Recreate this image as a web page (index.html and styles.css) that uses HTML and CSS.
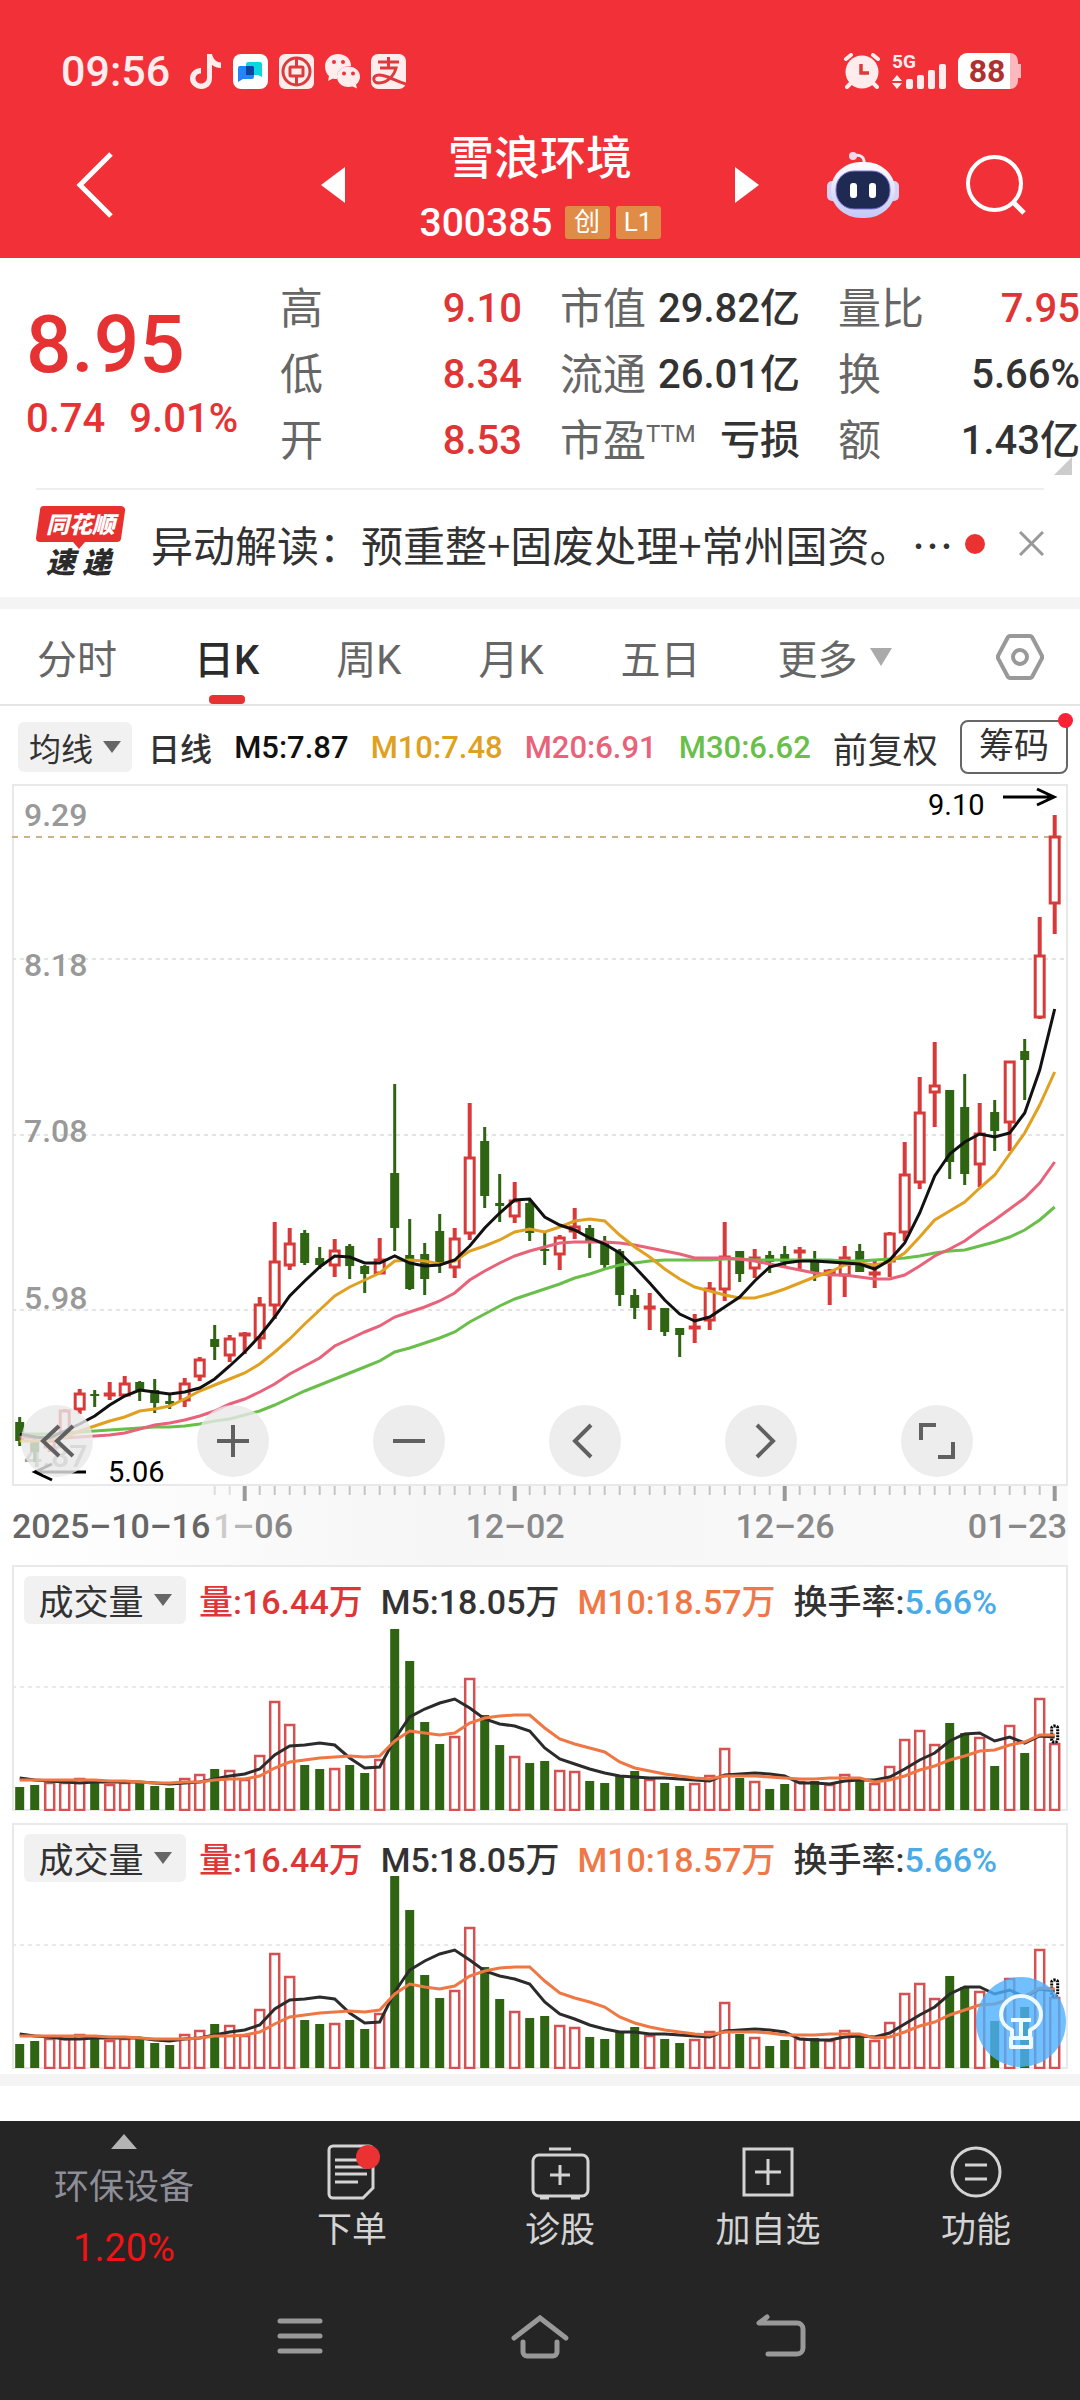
FILE: index.html
```html
<!DOCTYPE html>
<html lang="zh">
<head>
	<meta charset="UTF-8" />
	<meta name="viewport" content="width=device-width, initial-scale=1.0" />
	<title>雪浪环境 300385</title>
	<link rel="stylesheet" href="styles.css">
</head>
<body>
	<header class="top">
		<div class="status">
			<span class="clock">09:56</span>
			<svg class="app_ico" viewBox="0 0 35 35" width="35" height="35"><path d="M20 0h5c1 5 4 8 9 8.500v5.500c-3.500 0-6.500-1-9-3v13c0 7-5 11-10.500 11S3 30.500 3 24.500 8 14 14 14v5.500c-3.500 0-5.500 2.200-5.500 5s2.500 5 5.500 5c3.500 0 6-2.500 6-6z" fill="#ffecec"/></svg>
			<svg class="app_ico" viewBox="0 0 35 35" width="35" height="35"><rect width="35" height="35" rx="8" fill="#fff"/><path d="M15 8h12a2 2 0 0 1 2 2v13l-4-2H13V10a2 2 0 0 1 2-2z" fill="#0bd8de"/><path d="M7 12h12a2 2 0 0 1 2 2v9a2 2 0 0 1-2 2h-9l-5 3V14a2 2 0 0 1 2-2z" fill="#2484fb"/><path d="M13 12h6a2 2 0 0 1 2 2v7h-8z" fill="#0a469c"/></svg>
			<svg class="app_ico" viewBox="0 0 35 35" width="35" height="35"><rect width="35" height="35" rx="6" fill="#ffecec"/><g fill="none" stroke="#dc3b3d" stroke-width="3"><circle cx="17.500" cy="17.500" r="13.500"/><rect x="11" y="13" width="13" height="9" rx="1"/><path d="M17.500 4v9M17.500 22v9"/></g></svg>
			<svg class="app_ico" viewBox="0 0 35 35" width="35" height="35"><path d="M13 0c7.500 0 13 5 13 11.500v.5c-8 0-14 4-14 11v2c-2 0-3 0-4-.500L3 27l1-5C1.500 20 0 16 0 12.500 0 5.500 5.500 0 13 0z" fill="#ffecec"/><path d="M23.500 12.500c6.500 0 11.500 4.500 11.500 10 0 3.500-1.500 6-4 8l1 4-4.500-2c-9 2-15.500-3-15.500-10 0-5.500 5-10 11.500-10z" fill="#ffecec"/><g fill="#f03038"><circle cx="9" cy="8" r="2"/><circle cx="18" cy="8" r="2"/><circle cx="19" cy="19.500" r="2"/><circle cx="28" cy="19.500" r="2"/></g></svg>
			<svg class="app_ico" viewBox="0 0 35 35" width="35" height="35"><rect width="35" height="35" rx="7" fill="#ffecec"/><path d="M7 8h21M17.500 3v10M9 14h16c-2 8-9 15-17 15-7 0-7-8 0-8 8 0 14 5 27 9" fill="none" stroke="#dc3b3d" stroke-width="3"/></svg>

			<svg class="alarm" viewBox="0 0 38 36" width="38" height="36"><g stroke="#ffecec" stroke-width="4" stroke-linecap="round"><path d="M3 6l5-4M35 6l-5-4M8 30l-4 4M30 30l4 4"/></g><circle cx="19" cy="19" r="16.500" fill="#ffecec"/><path d="M18 11v9h8" fill="none" stroke="#dc3b3d" stroke-width="3.500"/></svg>
			<svg class="signal" viewBox="0 0 55 42" width="55" height="42"><text x="0" y="18" class="net">5G</text><g fill="#ffecec"><path d="M5 25l5 6H0zM0 33h10l-5 6z"/><rect x="14" y="29" width="7" height="10" rx="2"/><rect x="25" y="25" width="7" height="14" rx="2"/><rect x="36" y="20" width="7" height="19" rx="2"/><rect x="47" y="14" width="7" height="25" rx="2"/></g></svg>
			<svg class="battery" viewBox="0 0 64 36" width="64" height="36"><path d="M10 0h42a8 8 0 0 1 8 8v3h3v14h-3v3a8 8 0 0 1-8 8H10z" fill="#fbb9bd"/><path d="M9 0h43v36H9a9 9 0 0 1-9-9V9a9 9 0 0 1 9-9z" fill="#fff"/><text x="29" y="29" text-anchor="middle" class="level">88</text></svg>
		</div>
		<div class="bar">
			<div class="bar_l">
				<button type="button" aria-label="返回"><svg viewBox="0 0 38 66" width="38" height="66"><path d="M35 2L4 33l31 31" fill="none" stroke="#fff" stroke-width="5"/></svg></button>
				<button type="button" aria-label="上一只"><svg viewBox="0 0 24 36" width="24" height="36"><path d="M24 0v36L0 18z" fill="#fff"/></svg></button>
			</div>
			<div class="title">
				<h1>雪浪环境</h1>
				<p><span class="code">300385</span><span class="tag">创</span><span class="tag">L1</span></p>
			</div>
			<div class="bar_r">
				<button type="button" aria-label="下一只"><svg viewBox="0 0 24 36" width="24" height="36"><path d="M0 0v36l24-18z" fill="#fff"/></svg></button>
				<button type="button" aria-label="智能助手">
					<svg viewBox="0 0 72 66" width="72" height="66">
						<defs><linearGradient id="shell" x1="0" y1="0" x2="0" y2="1"><stop offset="0" stop-color="#fff"/><stop offset="1" stop-color="#c3c8f6"/></linearGradient></defs>
						<path d="M27 4c6-2 11 1 10 8" fill="none" stroke="#f4e6f4" stroke-width="3"/><circle cx="26" cy="4" r="4" fill="#f0d9ea"/>
						<rect x="0" y="29" width="12" height="20" rx="5" fill="#d5d2f6"/><rect x="60" y="29" width="12" height="20" rx="5" fill="#d5d2f6"/>
						<rect x="4" y="10" width="64" height="56" rx="30" ry="27" fill="url(#shell)"/>
						<rect x="9" y="19" width="54" height="38" rx="18" fill="#1e2a52" stroke="#8173d8" stroke-width="1"/>
						<rect x="23" y="31" width="7" height="15" rx="3" fill="#fff"/><rect x="42" y="31" width="7" height="15" rx="3" fill="#fff"/>
					</svg>
				</button>
				<button type="button" aria-label="搜索"><svg viewBox="0 0 60 60" width="60" height="60"><g fill="none" stroke="#fff" stroke-width="4"><circle cx="28.500" cy="28.500" r="26.500"/><path d="M47 47l11 11" stroke-width="5"/></g></svg></button>
			</div>
		</div>
	</header>

	<section class="quote">
		<div class="price">
			<strong>8.95</strong>
			<p><span>0.74</span><span>9.01%</span></p>
		</div>
		<dl>
			<div><dt>高</dt><dd class="red">9.10</dd></div>
			<div><dt>低</dt><dd class="red">8.34</dd></div>
			<div><dt>开</dt><dd class="red">8.53</dd></div>
		</dl>
		<dl>
			<div><dt>市值</dt><dd>29.82亿</dd></div>
			<div><dt>流通</dt><dd>26.01亿</dd></div>
			<div><dt>市盈<sup>TTM</sup></dt><dd>亏损</dd></div>
		</dl>
		<dl>
			<div><dt>量比</dt><dd class="red">7.95</dd></div>
			<div><dt>换</dt><dd>5.66%</dd></div>
			<div><dt>额</dt><dd>1.43亿</dd></div>
		</dl>
		<i class="corner"></i>
	</section>

	<section class="news">
		<svg viewBox="0 0 92 78" width="92" height="78"><path d="M9 1h77a4 4 0 0 1 4 5l-4 28a4 4 0 0 1-4 3H50l-6 7-6-7H5a4 4 0 0 1-4-4L5 5a4 4 0 0 1 4-4z" fill="#e8302f"/><text x="11" y="28" class="logo_a">同花顺</text><text x="11" y="68" class="logo_b">速</text><text x="47" y="68" class="logo_b">递</text></svg>
		<a href="#">异动解读：预重整+固废处理+常州国资。…</a>
		<i class="news_dot"></i>
		<button type="button" aria-label="关闭"><svg viewBox="0 0 25 25" width="25" height="25"><path d="M1 1l23 23M24 1L1 24" stroke="#999" stroke-width="3"/></svg></button>
	</section>

	<nav class="tabs">
		<button type="button">分时</button>
		<button type="button" class="on">日K</button>
		<button type="button">周K</button>
		<button type="button">月K</button>
		<button type="button">五日</button>
		<button type="button" class="more">更多<i></i></button>
		<button type="button" class="setting" aria-label="设置"><svg viewBox="0 0 48 46" width="48" height="46"><g fill="none" stroke="#999" stroke-width="4"><path d="M14 2h20a3 3 0 0 1 2 1l9 17a5 5 0 0 1 0 6l-9 17a3 3 0 0 1-2 1H14a3 3 0 0 1-2-1L3 26a5 5 0 0 1 0-6l9-17a3 3 0 0 1 2-1z"/><circle cx="24" cy="23" r="7"/></g></svg></button>
	</nav>

	<div class="ma_row">
		<button type="button" class="pick">均线<i></i></button>
		<span class="cycle">日线</span>
		<span class="m5">M5:7.87</span>
		<span class="m10">M10:7.48</span>
		<span class="m20">M20:6.91</span>
		<span class="m30">M30:6.62</span>
		<span class="fq">前复权</span>
		<button type="button" class="chip">筹码</button>
	</div>

	<div class="kline">
		<svg id="kline" viewBox="12 784 1056 781" role="img" aria-label="日K线图"></svg>
		<div class="tools">
			<button type="button" aria-label="最左"><svg viewBox="0 0 36 36"><path d="M20 3L4 18l16 15M34 3L18 18l16 15"/></svg></button>
			<button type="button" aria-label="放大"><svg viewBox="0 0 36 36"><path d="M18 2v32M2 18h32"/></svg></button>
			<button type="button" aria-label="缩小"><svg viewBox="0 0 36 36"><path d="M2 18h32"/></svg></button>
			<button type="button" aria-label="左移"><svg viewBox="0 0 36 36"><path d="M24 2L8 18l16 16"/></svg></button>
			<button type="button" aria-label="右移"><svg viewBox="0 0 36 36"><path d="M14 2l16 16-16 16"/></svg></button>
			<button type="button" aria-label="全屏"><svg viewBox="0 0 36 36"><path d="M2 17V2h15M19 34h15V19"/></svg></button>
		</div>
	</div>

	<section class="vol">
		<svg id="vol1" viewBox="12 0 1056 246" role="img" aria-label="成交量"></svg>
		<div class="vol_head">
			<button type="button" class="pick">成交量<i></i></button>
			<span class="red">量:16.44万</span>
			<span>M5:18.05万</span>
			<span class="orange">M10:18.57万</span>
			<span>换手率:<b>5.66%</b></span>
		</div>
	</section>
	<section class="vol">
		<svg id="vol2" viewBox="12 0 1056 246" role="img" aria-label="成交量"></svg>
		<div class="vol_head">
			<button type="button" class="pick">成交量<i></i></button>
			<span class="red">量:16.44万</span>
			<span>M5:18.05万</span>
			<span class="orange">M10:18.57万</span>
			<span>换手率:<b>5.66%</b></span>
		</div>
		<button type="button" class="bulb" aria-label="提示"><svg viewBox="0 0 44 56" width="44" height="56"><g fill="none" stroke="#eefaff" stroke-width="4" stroke-linejoin="round"><path d="M13 42v-6C6 33 2 27 2 21a20 19 0 0 1 40 0c0 6-4 12-11 15v6"/><path d="M12 26h20M22 26v18M12 44h20v9H12z"/></g></svg></button>
	</section>
	<div class="line"></div>

	<footer class="bottom">
		<div class="menu">
			<a href="#" class="plate"><i></i><span>环保设备</span><em>1.20%</em></a>
			<a href="#"><svg viewBox="0 0 56 56" width="56" height="56"><g fill="none" stroke="#d4d4d4" stroke-width="3"><path d="M9 2h36a4 4 0 0 1 4 4v38L39 54H9a4 4 0 0 1-4-4V6a4 4 0 0 1 4-4z"/><path d="M11 16h24M11 23h32M11 30h32M11 38h23"/></g><circle cx="44" cy="13" r="12" fill="#ea3233"/></svg><span>下单</span></a>
			<a href="#"><svg viewBox="0 0 60 56" width="60" height="56"><g fill="none" stroke="#d4d4d4" stroke-width="3"><rect x="3" y="11" width="55" height="41" rx="6"/><path d="M19 5h22M30 21v20M20 31h20M10 54h9M41 54h9"/></g></svg><span>诊股</span></a>
			<a href="#"><svg viewBox="0 0 56 56" width="56" height="56"><g fill="none" stroke="#d4d4d4" stroke-width="3"><rect x="4" y="5" width="48" height="46"/><path d="M28 15v26M15 28h26"/></g></svg><span>加自选</span></a>
			<a href="#"><svg viewBox="0 0 56 56" width="56" height="56"><g fill="none" stroke="#d4d4d4" stroke-width="3"><circle cx="28" cy="28" r="24"/><path d="M17 21h22M17 35h22"/></g></svg><span>功能</span></a>
		</div>
		<div class="sys">
			<button type="button" aria-label="菜单"><svg viewBox="0 0 60 46" width="60" height="46"><path d="M10 7h40M10 22h40M10 37h40" stroke="#999" stroke-width="5" stroke-linecap="round"/></svg></button>
			<button type="button" aria-label="主页"><svg viewBox="0 0 60 46" width="60" height="46"><path d="M4 24L30 4l26 20M13 28v10a4 4 0 0 0 4 4h26a4 4 0 0 0 4-4V28" fill="none" stroke="#999" stroke-width="5" stroke-linecap="round"/></svg></button>
			<button type="button" aria-label="返回"><svg viewBox="0 0 60 46" width="60" height="46"><path d="M17 3L9 9h38a6 6 0 0 1 6 6v19a6 6 0 0 1-6 6H18" fill="none" stroke="#999" stroke-width="5" stroke-linecap="round" stroke-linejoin="round"/></svg></button>
		</div>
	</footer>

	<script src="chart.js"></script>
</body>
</html>
```
FILE: styles.css
```css
*{ margin: 0;padding: 0;box-sizing: border-box;}
body{
	background: #fff;
	color: #323232;
	font-family: Roboto, "Noto Sans CJK SC", sans-serif;
	min-height: 100vh;
	display: flex;
	flex-direction: column;
}
button{ border: 0;background: none;font: inherit;color: inherit;cursor: pointer;}
a{ text-decoration: none;color: inherit;}
i,em{ font-style: normal;}
svg{ display: block;}
.red{ color: #e03535;}
.orange{ color: #f07846;}

/* 顶部 */
.top{ background: #f13038;color: #fff;height: 258px;}
.status{
	display: flex;
	align-items: center;
	gap: 11px;
	padding: 53px 58px 0 61px;
	height: 89px;
	color: #ffecec;
}
.clock{ font-size: 43px;line-height: 36px;font-weight: 500;margin-right: 6px;}
.alarm{ margin-left: auto;}
.net{ font-size: 19px;font-weight: 700;fill: #ffecec;}
.level{ font-size: 32px;font-weight: 700;fill: #b03030;}
.bar{
	display: grid;
	grid-template-columns: 1fr 390px 1fr;
	align-items: center;
	height: 169px;
}
.bar_l,.bar_r{ display: flex;justify-content: space-between;align-items: center;padding-top: 22px;}
.bar_l{ padding-left: 76px;}
.bar_r{ padding-right: 54px;}
.title{ text-align: center;padding-top: 32px;}
.title h1{ font-size: 46px;line-height: 66px;font-weight: 500;}
.title p{ display: flex;justify-content: center;align-items: center;gap: 6px;height: 64px;}
.code{ font-size: 39px;font-weight: 500;margin-right: 6px;}
.tag{
	width: 45px;
	height: 33px;
	line-height: 33px;
	font-size: 26px;
	background: #e08c46;
	border-radius: 3px;
}

/* 行情 */
.quote{
	position: relative;
	display: grid;
	grid-template-columns: 216fr 242fr 240fr 242fr;
	column-gap: 38px;
	padding: 18px 0 16px 26px;
}
.quote::after{
	content: "";
	position: absolute;
	left: 36px;
	right: 36px;
	bottom: 0;
	height: 2px;
	background: #eee;
}
.price{ color: #e63232;padding-top: 25px;white-space: nowrap;}
.price strong{ display: block;font-size: 80px;line-height: 88px;font-weight: 500;}
.price p{ display: flex;gap: 24px;font-size: 40px;line-height: 60px;font-weight: 500;}
.quote dl div{ display: flex;justify-content: space-between;height: 66px;line-height: 66px;white-space: nowrap;}
.quote dt{ font-size: 43px;color: #666;}
.quote dt sup{ font-size: 24px;line-height: 24px;vertical-align: 14px;}
.quote dd{ font-size: 40px;font-weight: 500;}
.corner{
	position: absolute;
	right: 8px;
	bottom: 15px;
	border-left: 18px solid transparent;
	border-bottom: 18px solid #ccc;
}

.news{ display: flex;align-items: center;height: 107px;padding: 0 36px 0 35px;}
.news a{
	flex: 1;
	min-width: 0;
	margin-left: 24px;
	font-family: "Noto Sans CJK SC", sans-serif;
	font-size: 42px;
	white-space: nowrap;
	overflow: hidden;
}
.news_dot{ width: 20px;height: 20px;border-radius: 50%;background: #ea3233;margin-right: 34px;}
.logo_a{ font-size: 23px;font-weight: 900;font-style: italic;fill: #fff;}
.logo_b{ font-size: 29px;font-weight: 900;font-style: italic;fill: #2b2b2b;}

/* 周期 */
.tabs{
	display: flex;
	align-items: stretch;
	gap: 77px;
	height: 109px;
	padding: 0 36px 0 37px;
	border-top: 12px solid #f4f4f4;
	border-bottom: 2px solid #e6e6e6;
	font-size: 40px;
	color: #666;
}
.tabs button{ position: relative;white-space: nowrap;}
.tabs .on{ color: #2b2b2b;font-weight: 500;}
.tabs .on::after{
	content: "";
	position: absolute;
	left: 50%;
	bottom: 0;
	width: 36px;
	height: 9px;
	margin-left: -18px;
	border-radius: 4px;
	background: #e63232;
}
.more{ display: flex;align-items: center;gap: 12px;}
.more i{ border: 11px solid transparent;border-top: 18px solid #aaa;border-bottom: 0;}
.setting{ margin-left: auto;}

.ma_row{
	display: flex;
	justify-content: space-between;
	align-items: center;
	height: 78px;
	padding: 4px 12px 0 18px;
	font-size: 31px;
	white-space: nowrap;
}
.ma_row span{ font-weight: 500;}
.pick{
	display: flex;
	align-items: center;
	justify-content: center;
	gap: 10px;
	background: #f1f1f1;
	border-radius: 6px;
}
.pick i{ border: 9px solid transparent;border-top: 12px solid #666;border-bottom: 0;}
.ma_row .pick{ width: 114px;height: 50px;font-size: 32px;margin-right: -6px;}
.ma_row .cycle{ font-size: 32px;}
.ma_row .fq{ font-size: 35px;font-weight: 400;}
.ma_row .m5{ color: #111;}
.m10{ color: #e0a020;}
.m20{ color: #e8637a;}
.m30{ color: #6abf4b;}
.chip{
	position: relative;
	width: 108px;
	height: 54px;
	border: 2px solid #666;
	border-radius: 8px;
	font-size: 35px;
	line-height: 50px;
}
.chip::after{
	content: "";
	position: absolute;
	top: -9px;
	right: -7px;
	width: 15px;
	height: 15px;
	border-radius: 50%;
	background: #fb2237;
}

/* K线 */
.kline{ position: relative;margin: 0 12px;}
.kline > svg,.vol > svg{ width: 100%;height: auto;}
.tools{
	position: absolute;
	left: 9px;
	bottom: 88px;
	display: flex;
	gap: 104px;
}
.tools button{
	display: flex;
	align-items: center;
	justify-content: center;
	width: 72px;
	height: 72px;
	border-radius: 50%;
	background: rgba(233,233,233,.8);
}
.tools svg{ width: 36px;height: 36px;fill: none;stroke: #606060;stroke-width: 4;}
.axis{ font-size: 32px;font-weight: 500;fill: #999;}
.date{ font-size: 34px;font-weight: 500;fill: #888;}
.date_on{ fill: #666;}
.mark{ font-size: 29px;fill: #000;}

/* 成交量 */
.vol{ position: relative;display: grid;margin: 0 12px 12px;}
.vol > svg,.vol_head{ grid-area: 1 / 1;}
.vol_head{
	display: flex;
	align-items: center;
	align-self: start;
	gap: 18px;
	margin: 10px 0 0 12px;
	font-size: 34px;
	font-weight: 500;
	white-space: nowrap;
}
.vol_head .pick{ width: 162px;height: 48px;font-size: 35px;font-weight: 400;margin-right: -5px;}
.vol_head b{ color: #4aabe8;font-weight: 500;}
.bulb{
	position: absolute;
	right: 2px;
	bottom: 2px;
	display: flex;
	align-items: center;
	justify-content: center;
	width: 90px;
	height: 90px;
	border-radius: 50%;
	background: rgba(76,176,255,.8);
}
.line{ height: 12px;margin-top: -7px;background: #f4f4f4;}

/* 底部 */
.bottom{ margin-top: auto;background: #252525;color: #d4d4d4;height: 279px;}
.menu{ display: grid;grid-template-columns: 248fr 208fr 208fr 208fr 208fr;height: 170px;}
.menu a{ display: flex;flex-direction: column;align-items: center;padding-top: 23px;font-size: 35px;}
.menu a span{ line-height: 61px;}
.menu .plate{ padding-top: 13px;}
.plate i{ border: 13px solid transparent;border-bottom: 15px solid #b4b4b4;border-top: 0;}
.menu .plate span{ color: #8e8e98;margin-top: 8px;}
.plate em{ font-size: 38px;line-height: 60px;color: #f01414;}
.sys{ display: flex;padding: 23px 16.66% 0;}
.sys button{ flex: 1;display: flex;justify-content: center;}
```
FILE: chart.js
```javascript
var X0 = 19.7, STEP = 15;
var RED = '#d83a3a', GREEN = '#2f6412';

// 涨跌(1涨 0跌), 最高, 实体上, 实体下, 最低
var candles = [
	[0,1417,1422,1441,1446],[0,1433,1440,1452,1462],[1,1437,1440,1448,1452],[1,1409,1410,1434,1436],[1,1389,1393,1410,1414],
	[0,1390,1394,1396,1407],[1,1382,1393,1395,1400],[1,1376,1383,1396,1397],[0,1381,1382,1390,1401],[0,1379,1390,1403,1413],
	[0,1395,1401,1404,1409],[1,1378,1383,1401,1407],[1,1357,1359,1377,1381],[0,1325,1339,1347,1360],[1,1335,1338,1356,1362],
	[1,1332,1333,1336,1354],[1,1297,1304,1339,1349],[1,1222,1261,1306,1319],[1,1228,1243,1266,1270],[0,1230,1233,1263,1265],
	[0,1247,1258,1265,1269],[1,1239,1250,1266,1277],[0,1244,1246,1266,1279],[0,1265,1266,1274,1293],[1,1238,1259,1274,1274],
	[0,1084,1173,1228,1251],[0,1219,1255,1289,1290],[0,1243,1254,1279,1295],[0,1214,1231,1265,1273],[1,1228,1238,1268,1278],
	[1,1103,1157,1234,1240],[0,1127,1141,1196,1208],[0,1174,1203,1206,1222],[1,1182,1200,1217,1223],[0,1200,1203,1233,1241],
	[0,1233,1249,1251,1265],[1,1235,1237,1255,1270],[1,1208,1226,1232,1239],[0,1225,1228,1241,1258],[0,1236,1242,1265,1268],
	[0,1249,1251,1295,1306],[0,1289,1295,1308,1319],[1,1293,1306,1308,1330],[0,1308,1308,1332,1336],[0,1328,1328,1335,1357],
	[1,1314,1326,1328,1343],[1,1282,1288,1321,1330],[1,1222,1256,1290,1301],[0,1251,1251,1274,1282],[1,1249,1257,1269,1278],
	[0,1251,1255,1262,1273],[0,1246,1254,1262,1266],[1,1247,1250,1252,1270],[0,1251,1261,1272,1281],[1,1269,1270,1274,1305],
	[1,1246,1257,1276,1297],[0,1244,1251,1272,1272],[1,1261,1272,1274,1288],[1,1232,1233,1262,1277],[1,1142,1174,1233,1241],
	[1,1077,1112,1183,1189],[1,1042,1085,1093,1127],[0,1090,1090,1162,1179],[0,1074,1107,1174,1185],[1,1103,1133,1165,1187],
	[0,1100,1112,1131,1151],[1,1061,1061,1123,1151],[0,1039,1051,1060,1100],[1,917,955,1018,1019],[1,815,836,904,934]
];

var ma = {
	'#6abf4b': [1434,1434,1434,1433,1432,1431,1430,1429,1428,1427,1427,1426,1424,1421,1419,1415,1411,1405,1398,1391,1385,1379,1373,1367,1361,1352,1348,1343,1338,1332,1322,1314,1306,1299,1294,1289,1284,1278,1274,1269,1265,1263,1261,1260,1260,1260,1260,1259,1259,1260,1260,1260,1260,1260,1260,1261,1261,1260,1259,1258,1256,1253,1251,1250,1246,1242,1237,1230,1220,1207],
	'#e8637a': [1437,1438,1438,1438,1437,1436,1435,1433,1429,1425,1423,1420,1416,1411,1404,1399,1392,1384,1374,1366,1358,1346,1339,1332,1326,1317,1312,1307,1301,1293,1280,1271,1263,1256,1251,1247,1243,1242,1242,1242,1243,1245,1248,1251,1254,1258,1258,1258,1259,1261,1264,1267,1270,1273,1275,1275,1277,1279,1279,1275,1266,1256,1249,1241,1230,1220,1209,1198,1183,1162],
	'#e0a020': [1441,1441,1440,1437,1431,1426,1421,1417,1411,1409,1406,1399,1391,1385,1379,1373,1364,1352,1339,1324,1310,1296,1287,1280,1273,1261,1260,1261,1264,1261,1251,1246,1240,1232,1229,1232,1227,1221,1219,1221,1235,1247,1257,1269,1279,1287,1291,1295,1298,1298,1294,1289,1283,1277,1272,1265,1263,1265,1262,1253,1237,1220,1211,1202,1188,1175,1154,1133,1105,1072],
	'#111111': [1434,1437,1438,1431,1424,1416,1405,1396,1390,1392,1394,1392,1388,1379,1366,1352,1336,1317,1296,1281,1267,1256,1257,1263,1263,1256,1263,1266,1265,1260,1246,1228,1213,1200,1199,1217,1225,1230,1238,1244,1253,1267,1283,1300,1314,1321,1317,1307,1297,1281,1267,1263,1261,1261,1262,1263,1264,1269,1260,1243,1213,1176,1154,1142,1134,1137,1133,1113,1070,1009]
};

// 前9个只用来算均量
var vols = [77,77,77,77,77,98,98,98,97,
	64,70,78,78,91,78,73,78,78,67,62,91,100,115,113,86,155,304,242,126,115,119,126,104,144,
	507,417,246,185,206,371,266,182,151,132,137,113,108,81,76,95,109,88,76,67,76,97,175,90,82,
	59,73,80,80,73,100,86,75,122,198,223,186,244,215,204,123,237,160,313,187];

function px(i) { return Math.round((X0 + STEP * i) * 10) / 10; }

function poly(list, color, w) {
	var pts = list.map(function (y, i) { return px(i) + ',' + y; }).join(' ');
	return '<polyline points="' + pts + '" fill="none" stroke="' + color + '" stroke-width="' + w + '"/>';
}

function dash(y, color, gap) {
	return '<path d="M12 ' + y + 'H1064" stroke="' + color + '" stroke-width="2" stroke-dasharray="' + gap + '"/>';
}

function frame(y, h) {
	return '<rect x="13" y="' + (y + 1) + '" width="1054" height="' + h + '" fill="none" stroke="#e9e9e9" stroke-width="2"/>';
}

function drawK() {
	var s = '<defs><linearGradient id="fade"><stop offset="0" stop-color="#fff"/><stop offset=".4" stop-color="#f6f6f6"/><stop offset="1" stop-color="#fafafa"/></linearGradient></defs>';
	s += '<rect x="12" y="1486" width="1056" height="79" fill="url(#fade)"/>';
	s += frame(784, 700);
	s += dash(959, '#e4e4e4', '4 4') + dash(1135, '#e4e4e4', '4 4') + dash(1310, '#e4e4e4', '4 4');
	s += dash(837, '#c9b387', '6 6');
	[['9.29', 826], ['8.18', 976], ['7.08', 1142], ['5.98', 1309], ['4.87', 1467]].forEach(function (t) {
		s += '<text class="axis" x="24" y="' + t[1] + '">' + t[0] + '</text>';
	});
	candles.forEach(function (c, i) {
		var x = px(i);
		if (c[0]) {
			s += '<path d="M' + x + ' ' + c[1] + 'V' + c[2] + 'M' + x + ' ' + c[3] + 'V' + c[4] + '" stroke="' + RED + '" stroke-width="4"/>';
			s += '<rect x="' + (x - 4.5) + '" y="' + (c[2] + 1) + '" width="9" height="' + Math.max(c[3] - c[2] - 2, 1) + '" fill="#fff" stroke="' + RED + '" stroke-width="3"/>';
		} else {
			s += '<path d="M' + x + ' ' + c[1] + 'V' + c[4] + '" stroke="' + GREEN + '" stroke-width="3"/>';
			s += '<rect x="' + (x - 4.5) + '" y="' + c[2] + '" width="9" height="' + (c[3] - c[2]) + '" fill="' + GREEN + '"/>';
		}
	});
	for (var k in ma) s += poly(ma[k], k, 3);
	s += '<path d="M1003 797H1054M1037 789l17 8-17 8M86 1472H35M52 1464l-17 8 17 8" fill="none" stroke="#000" stroke-width="3"/>';
	s += '<text class="mark" x="928" y="815">9.10</text><text class="mark" x="108" y="1482">5.06</text>';
	for (var i = 13; i < 70; i++) {
		var big = (i - 15) % 18 == 0;
		s += '<path d="M' + px(i) + ' 1486v' + (big ? 15 : 9) + '" stroke="' + (i < 15 ? '#ddd' : big ? '#999' : '#c4c4c4') + '" stroke-width="' + (big ? 4 : 2) + '"/>';
	}
	s += '<text class="date date_on" x="12" y="1538">2025–10–16</text>';
	s += '<text class="date" x="293" y="1538" text-anchor="end"><tspan fill="#ccc">1</tspan><tspan fill="#b5b5b5">–</tspan>06</text>';
	s += '<text class="date" x="515" y="1538" text-anchor="middle">12–02</text>';
	s += '<text class="date" x="785" y="1538" text-anchor="middle">12–26</text>';
	s += '<text class="date" x="1067" y="1538" text-anchor="end">01–23</text>';
	document.getElementById('kline').innerHTML = s;
}

function avg(n, scale) {
	var out = [];
	for (var i = 9; i < vols.length; i++) {
		var sum = 0;
		for (var j = 0; j < n; j++) sum += vols[i - j];
		out.push(Math.round(245 - sum / n * scale));
	}
	return out;
}

function drawVol(id, scale) {
	var s = frame(0, 244) + dash(122, '#e9e9e9', '4 4');
	candles.forEach(function (c, i) {
		var h = Math.round(vols[i + 9] * scale), x = px(i);
		if (c[0]) {
			s += '<rect x="' + (x - 4.5) + '" y="' + (246 - h) + '" width="9" height="' + (h - 1) + '" fill="#fff" stroke="#d65252" stroke-width="2.5"/>';
		} else {
			s += '<rect x="' + (x - 4.5) + '" y="' + (245 - h) + '" width="9" height="' + h + '" fill="' + GREEN + '"/>';
		}
	});
	// 当日预估量
	s += '<rect x="' + (px(69) - 3) + '" y="' + Math.round(228 - 187 * scale) + '" width="6" height="16" rx="2" fill="none" stroke="#000" stroke-width="3" stroke-dasharray="2 1"/>';
	s += poly(avg(5, scale), '#2b2b2b', 3) + poly(avg(10, scale), '#ee7744', 3);
	document.getElementById(id).innerHTML = s;
}

drawK();
drawVol('vol1', 0.357);
drawVol('vol2', 0.379);
```
